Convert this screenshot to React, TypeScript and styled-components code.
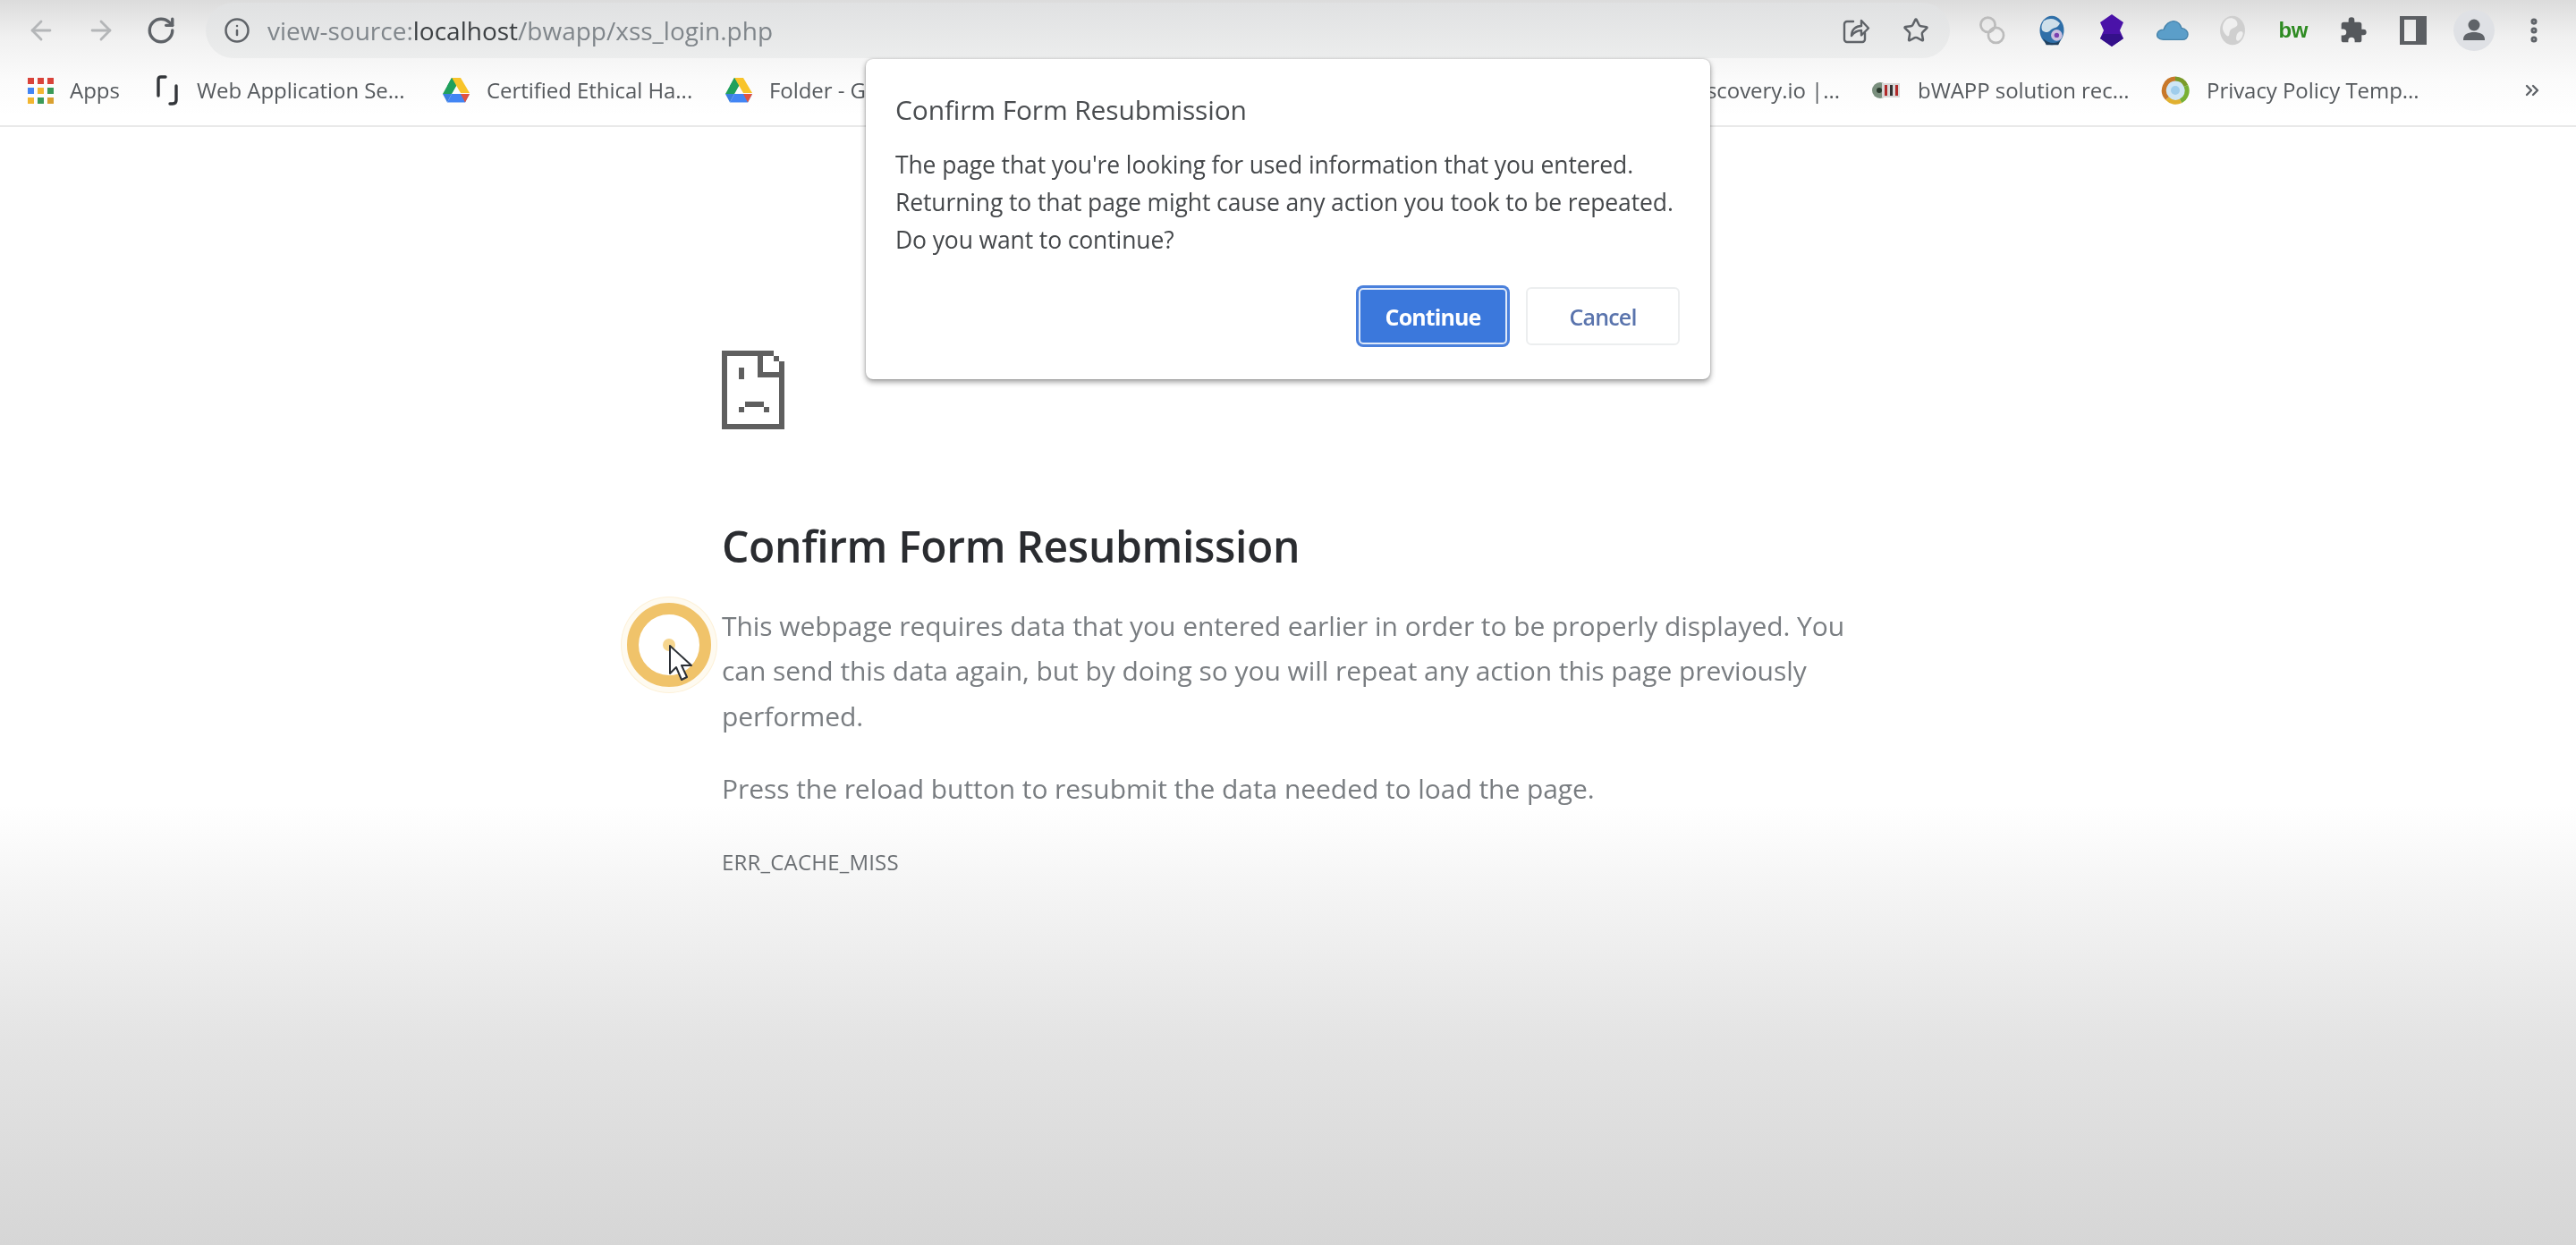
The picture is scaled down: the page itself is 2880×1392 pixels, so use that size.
import React from "react";
import styled, { createGlobalStyle } from "styled-components";
import { ArrowLeft, ArrowRight, RotateCw, Info, Star, EllipsisVertical, ChevronsRight } from "lucide-react";

const Global = createGlobalStyle`
  html, body { margin: 0; padding: 0; background: #fff; }
  #root { width: 2880px; height: 1392px; overflow: hidden; }
`;
const FONT = `"Open Sans", "Noto Sans", "Liberation Sans", sans-serif`;

const Page = styled.div`
  position: relative; width: 2880px; height: 1392px; overflow: hidden;
  display: flex; flex-direction: column; font-family: ${FONT};
  background: linear-gradient(180deg, #fff 0, #fff 900px, #f4f4f4 1000px, #e4e4e4 1160px, #d6d6d6 1392px);
  filter: blur(0.7px);
`;
const Chrome = styled.header`
  flex: none; height: 140px; display: flex; flex-direction: column;
  background: linear-gradient(180deg, #dcdcdc 0, #f0f0f0 40px, #fbfbfb 90px, #fff 130px);
  border-bottom: 2px solid #e9e9e9;
`;
const Toolbar = styled.div`
  height: 68px; display: flex; align-items: center; padding: 0 12px;
`;
const NavButton = styled.div<{ $c?: string }>`
  flex: none; width: 67px; height: 60px; display: flex; align-items: center; justify-content: center;
  color: ${(p) => p.$c || "#5f6368"};
`;
const Pill = styled.div`
  flex: none; width: 1950px; height: 62px; margin-left: 17px; border-radius: 31px;
  background: linear-gradient(180deg, #e0e1e2, #eceded);
  display: flex; align-items: center; padding: 0 5px 0 20px; box-sizing: border-box;
`;
const InfoSlot = styled.div`
  width: 49px; display: flex; color: #5f6368;
`;
const Url = styled.div`
  font-size: 28px; letter-spacing: 0; color: #80868b; flex: 1;
`;
const Host = styled.span` color: #3c4043; `;
const PillAction = styled.div`
  flex: none; width: 67px; display: flex; justify-content: center; color: #5f6368;
`;
const Extensions = styled.div`
  display: flex; margin-left: 13px;
`;
const ExtButton = styled.div`
  flex: none; width: 67.4px; height: 60px; display: flex; align-items: center; justify-content: center;
  color: #5f6368;
`;
const BwMark = styled.span`
  font-family: "Liberation Sans", sans-serif; font-weight: 700; font-size: 24px; letter-spacing: -0.6px; color: #2e8b22;
`;
const Bookmarks = styled.nav`
  height: 68px; display: flex; align-items: center; padding: 0 0 6px 30px; position: relative;
`;
const Bookmark = styled.div<{ $w: number }>`
  flex: none; width: ${(p) => p.$w}px; display: flex; align-items: center; gap: 18px;
  font-size: 24px; letter-spacing: -0.05px; color: #55595d; white-space: nowrap; overflow: hidden;
`;
const TrailingBookmark = styled(Bookmark)`
  justify-content: flex-end; padding-right: 35px; box-sizing: border-box;
`;
const Main = styled.main`
  flex: 1; padding: 250px 0 0 807px;
`;
const SadWrap = styled.div` height: 88px; display: flex; `;
const Heading = styled.h1`
  margin: 96px 0 0; font-size: 48px; line-height: 70px; font-weight: 600; color: #2a2c30; letter-spacing: -0.35px;
`;
const Body = styled.p`
  margin: 29px 0 0; width: 1280px; font-size: 30px; line-height: 50.3px; color: #797d81; letter-spacing: -0.06px;
`;
const Reload = styled(Body)` margin-top: 31px; `;
const Code = styled.div`
  margin-top: 41px; font-size: 24px; line-height: 32px; color: #6b6f73; letter-spacing: 0.2px;
`;
const Dialog = styled.section`
  position: absolute; left: 968px; top: 66px; width: 944px; height: 358px; box-sizing: border-box;
  background: #fff; border-radius: 8px; padding: 36px 34px 0 33px;
  box-shadow: 0 3px 6px rgba(0,0,0,.4), 0 0 2px rgba(0,0,0,.25);
  display: flex; flex-direction: column;
`;
const DialogTitle = styled.h2`
  margin: 0; font-size: 30px; line-height: 42px; font-weight: 400; color: #4a4d50; letter-spacing: -0.15px;
`;
const DialogBody = styled.p`
  margin: 19px 0 0; font-size: 26.5px; line-height: 42px; color: #45484b; letter-spacing: -0.12px; white-space: pre-line;
`;
const Actions = styled.div`
  display: flex; justify-content: flex-end; gap: 21px; margin-top: 32px; align-items: center;
`;
const Primary = styled.button`
  width: 166px; height: 63px; border-radius: 5px; border: 2px solid #dfe9f9;
  background: #3b78dc; color: #fff; font: 700 25px ${FONT}; letter-spacing: -0.9px;
  box-shadow: 0 0 0 3px #4a80dc;
`;
const Secondary = styled.button`
  width: 172px; height: 65px; border-radius: 6px; border: 2px solid #eceeef; background: #fff;
  color: #5a74ad; font: 600 25px ${FONT}; letter-spacing: -0.8px;
`;
const Halo = styled.div`
  position: absolute; left: 695px; top: 668px; width: 106px; height: 106px; box-sizing: border-box;
  border-radius: 50%; background: #fefaf0; box-shadow: 0 0 0 1px #fdf1d8;
  display: flex; align-items: center; justify-content: center;
`;
const HaloRing = styled.div`
  width: 94px; height: 94px; box-sizing: border-box; border-radius: 50%; border: 13px solid #f0c36a;
  background: #fff; display: flex; align-items: center; justify-content: center;
`;
const HaloDot = styled.div`
  width: 14px; height: 14px; border-radius: 50%; background: #f6d68f;
`;
const Pointer = styled.svg`
  position: absolute; left: 746px; top: 720px;
`;

const Drive = () => (
  <svg width="32" height="30" viewBox="0 0 32 30">
    <path d="M11 1h10l-5 9-5 8.500L6 10z" fill="#1fa463" />
    <path d="M11 1h10l10 17H21z" fill="#f8c42a" />
    <path d="M11 1l5 9-5 9H1z" fill="#20a05c" />
    <path d="M11 19h20l-5 9.500H6z" fill="#4285f4" />
    <path d="M1 19h10l-5 9.500z" fill="#3a7fe0" />
    <path d="M21 19h10l-5 9.500z" fill="#e2533f" />
  </svg>
);
const AppsIcon = () => (
  <svg width="30" height="30" viewBox="0 0 30 30">
    {["#d9433a", "#d9433a", "#d9433a", "#4285f4", "#f2b630", "#3a9a58", "#f2b630", "#3a9a58", "#d9a030"].map((c, i) => (
      <rect key={i} x={1 + (i % 3) * 11} y={1 + Math.floor(i / 3) * 11} width="7" height="7" fill={c} />
    ))}
  </svg>
);
const BracketIcon = () => (
  <svg width="30" height="36" viewBox="0 0 30 36" fill="none" stroke="#33363a" strokeWidth="3.400" strokeLinecap="round">
    <path d="M5 24V6q0-3 3-3h5" />
    <path d="M25 13v16q0 4-4 4h-3" />
  </svg>
);
const BwappIcon = () => (
  <svg width="34" height="30" viewBox="0 0 34 30">
    <circle cx="10" cy="15" r="9" fill="#7a8f7e" />
    <rect x="12" y="7" width="20" height="16" fill="#d8d8d8" />
    <rect x="15" y="9" width="3" height="12" fill="#b02a2a" />
    <rect x="21" y="9" width="3" height="12" fill="#333" />
    <rect x="27" y="9" width="3" height="12" fill="#b02a2a" />
    <circle cx="9" cy="15" r="3" fill="#2a3a2e" />
  </svg>
);
const PrivacyIcon = () => (
  <svg width="34" height="36" viewBox="0 0 34 36">
    <circle cx="17" cy="18" r="13" fill="#cfe6f5" />
    <path d="M17 5a13 13 0 0 1 12 8" stroke="#7a9a2a" strokeWidth="5" fill="none" />
    <path d="M29 13a13 13 0 0 1-6 17" stroke="#78b034" strokeWidth="5" fill="none" />
    <path d="M23 30a13 13 0 0 1-15-3" stroke="#e0b030" strokeWidth="5" fill="none" />
    <path d="M8 27a13 13 0 0 1 9-22" stroke="#c8782a" strokeWidth="5" fill="none" />
    <circle cx="17" cy="18" r="5" fill="#9fcdec" />
  </svg>
);
const ShareBox = () => (
  <svg width="32" height="32" viewBox="0 0 32 32" fill="none" stroke="currentColor" strokeWidth="2.400" strokeLinejoin="round" strokeLinecap="round">
    <path d="M13 6H6a3 3 0 0 0-3 3v17a3 3 0 0 0 3 3h17a3 3 0 0 0 3-3v-7" />
    <path d="M11 22c0-7 5-11 11-11V5l8 8.500-8 8V16c-5 0-8 2-11 6z" />
  </svg>
);
const Rings = () => (
  <svg width="32" height="36" viewBox="0 0 34 40" fill="none" stroke="#bcbcbc" strokeWidth="3">
    <circle cx="12" cy="13" r="9" /><circle cx="22" cy="26" r="9.500" />
  </svg>
);
const Globe = () => (
  <svg width="32" height="36" viewBox="0 0 34 40">
    <ellipse cx="17" cy="20" rx="15" ry="18" fill="#2f6fa8" />
    <path d="M7 8c8-4 14-3 20 3-3 7-9 5-12 9-3 3-6 3-10 0-2-5 0-8 2-12z" fill="#cfe0ea" />
    <path d="M6 30c6 6 16 8 22 2l-3 6H10z" fill="#20405f" />
    <circle cx="23" cy="26" r="7" fill="#c9c0e0" />
    <circle cx="23" cy="26" r="3" fill="#7a3fb0" />
  </svg>
);
const PurpleGem = () => (
  <svg width="34" height="36" viewBox="0 0 34 36">
    <path d="M17 0l13 9-4 9 4 9-13 9-13-9 4-9-4-9z" fill="#4a12a8" />
    <path d="M4 27l13 9 13-9-4-5H8z" fill="#34108a" />
  </svg>
);
const Cloud = () => (
  <svg width="36" height="26" viewBox="0 0 36 30" preserveAspectRatio="none">
    <path d="M8 27C2 27 0 23 1 19c1-4 4-5 7-5 2-7 7-11 11-11 5 0 8 5 9 9 5 1 7 5 7 8 0 5-3 7-6 7z" fill="#5b9ec9" stroke="#4683ab" strokeWidth="1.500" />
  </svg>
);
const GreyGlobe = () => (
  <svg width="32" height="36" viewBox="0 0 34 40">
    <ellipse cx="17" cy="20" rx="15.500" ry="18" fill="#cfcfcf" />
    <path d="M10 6c6-3 12 0 13 5s-5 5-8 8-1 7-3 8-6-4-7-8 1-10 5-13zM25 22c3-2 5 0 5 2s-2 8-6 9-3-9 1-11z" fill="#efefef" />
  </svg>
);
const Puzzle = () => (
  <svg width="32" height="32" viewBox="0 0 24 24" fill="#55585c">
    <path d="M20.500 11H19V7a2 2 0 0 0-2-2h-4V3.500a2.500 2.500 0 0 0-5 0V5H4a2 2 0 0 0-2 2v3.800h1.500a2.700 2.700 0 0 1 0 5.400H2V20a2 2 0 0 0 2 2h3.800v-1.500a2.700 2.700 0 0 1 5.400 0V22H17a2 2 0 0 0 2-2v-4h1.500a2.500 2.500 0 0 0 0-5z" />
  </svg>
);
const SidePanel = () => (
  <svg width="30" height="32" viewBox="0 0 30 32">
    <path fillRule="evenodd" d="M0 0h30v32H0zM5 4v24h13V4z" fill="#5c5f63" />
  </svg>
);
const Avatar = () => (
  <svg width="46" height="46" viewBox="0 0 46 46">
    <circle cx="23" cy="23" r="23" fill="#dfe1e5" />
    <circle cx="23" cy="17" r="6.500" fill="#5f6368" />
    <path d="M11 33c0-6 6-8 12-8s12 2 12 8v1H11z" fill="#5f6368" />
  </svg>
);
const SadFile = () => (
  <svg width="70" height="88" viewBox="0 0 70 88" fill="#5f5f5f" shapeRendering="crispEdges">
    <rect x="0" y="0" width="6" height="88" />
    <rect x="0" y="0" width="58" height="6" />
    <rect x="0" y="82" width="70" height="6" />
    <rect x="64" y="18" width="6" height="70" />
    <rect x="40" y="0" width="6" height="30" />
    <rect x="40" y="24" width="30" height="6" />
    <rect x="58" y="6" width="6" height="6" />
    <rect x="64" y="12" width="6" height="6" />
    <rect x="19" y="19" width="6" height="13" />
    <rect x="19" y="63" width="6" height="6" />
    <rect x="26" y="57" width="21" height="6" />
    <rect x="47" y="63" width="6" height="6" />
  </svg>
);

export default function App() {
  return (
    <Page>
      <Global />
      <Chrome>
        <Toolbar>
          <NavButton $c="#b4b6b8"><ArrowLeft size={34} strokeWidth={2} /></NavButton>
          <NavButton $c="#b4b6b8"><ArrowRight size={34} strokeWidth={2} /></NavButton>
          <NavButton><RotateCw size={34} strokeWidth={2.4} /></NavButton>
          <Pill>
            <InfoSlot><Info size={30} strokeWidth={2} /></InfoSlot>
            <Url>view-source:<Host>localhost</Host>/bwapp/xss_login.php</Url>
            <PillAction><ShareBox /></PillAction>
            <PillAction><Star size={30} strokeWidth={2} /></PillAction>
          </Pill>
          <Extensions>
            <ExtButton><Rings /></ExtButton>
            <ExtButton><Globe /></ExtButton>
            <ExtButton><PurpleGem /></ExtButton>
            <ExtButton><Cloud /></ExtButton>
            <ExtButton><GreyGlobe /></ExtButton>
            <ExtButton><BwMark>bw</BwMark></ExtButton>
            <ExtButton><Puzzle /></ExtButton>
            <ExtButton><SidePanel /></ExtButton>
            <ExtButton><Avatar /></ExtButton>
            <ExtButton><EllipsisVertical size={34} strokeWidth={3} /></ExtButton>
          </Extensions>
        </Toolbar>
        <Bookmarks>
          <Bookmark $w={142}><AppsIcon />Apps</Bookmark>
          <Bookmark $w={322}><BracketIcon />Web Application Se...</Bookmark>
          <Bookmark $w={316}><Drive />Certified Ethical Ha...</Bookmark>
          <Bookmark $w={400}><Drive />Folder - Google Drive</Bookmark>
          <TrailingBookmark $w={882}>Discovery.io |...</TrailingBookmark>
          <Bookmark $w={323}><BwappIcon />bWAPP solution rec...</Bookmark>
          <Bookmark $w={404}><PrivacyIcon />Privacy Policy Temp...</Bookmark>
          <ChevronsRight size={24} strokeWidth={2.4} color="#5f6368" />
        </Bookmarks>
      </Chrome>
      <Main>
        <SadWrap><SadFile /></SadWrap>
        <Heading>Confirm Form Resubmission</Heading>
        <Body>This webpage requires data that you entered earlier in order to be properly displayed. You can send this data again, but by doing so you will repeat any action this page previously performed.</Body>
        <Reload>Press the reload button to resubmit the data needed to load the page.</Reload>
        <Code>ERR_CACHE_MISS</Code>
      </Main>
      <Dialog>
        <DialogTitle>Confirm Form Resubmission</DialogTitle>
        <DialogBody>{"The page that you're looking for used information that you entered.\nReturning to that page might cause any action you took to be repeated.\nDo you want to continue?"}</DialogBody>
        <Actions>
          <Primary>Continue</Primary>
          <Secondary>Cancel</Secondary>
        </Actions>
      </Dialog>
      <Halo><HaloRing><HaloDot /></HaloRing></Halo>
      <Pointer width="30" height="44" viewBox="0 0 30 44">
        <path d="M3 2v31l7-7 6 14 6-3-6-13h11z" fill="#fff" stroke="#2c3036" strokeWidth="2" strokeLinejoin="round" />
      </Pointer>
    </Page>
  );
}
